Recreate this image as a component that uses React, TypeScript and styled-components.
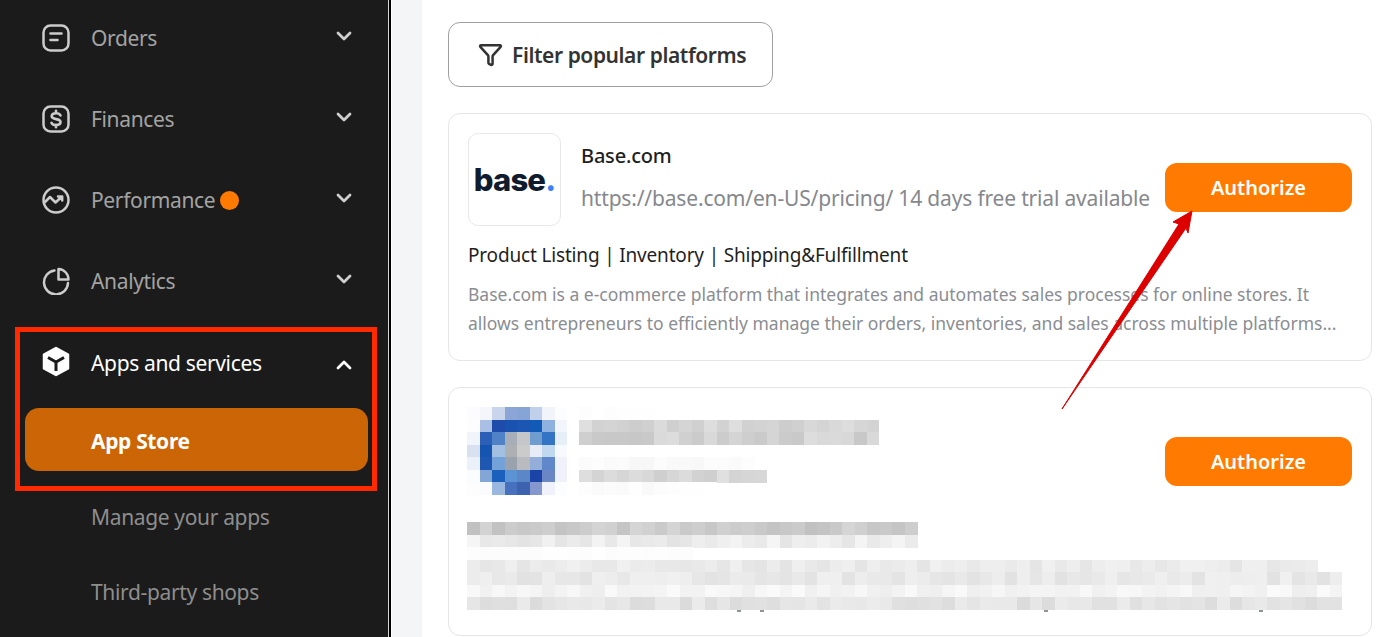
import styled, { createGlobalStyle } from "styled-components";
import { ChevronDown, ChevronUp, Funnel } from "lucide-react";

const GlobalStyle = createGlobalStyle`
  html, body {
    margin: 0;
    padding: 0;
    background: #fff;
    overflow: hidden;
  }
  * {
    box-sizing: border-box;
  }
`;

const FONT = `"Noto Sans", "Open Sans", sans-serif`;

const Page = styled.div`
  position: relative;
  display: flex;
  width: 1386px;
  height: 637px;
  overflow: hidden;
  font-family: ${FONT};
`;

const Sidebar = styled.aside`
  display: flex;
  flex-direction: column;
  flex: none;
  width: 388px;
  padding-top: 19.5px;
  background: #1b1b1b;
`;

const Rule = styled.div`
  flex: none;
  width: 4px;
  background: #000;
  border-left: 1px solid #d8d8d8;
  border-right: 1px solid #fff;
`;

const Gutter = styled.div`
  flex: none;
  width: 30px;
  background: #f4f5f7;
`;

const NavList = styled.nav`
  display: flex;
  flex-direction: column;
  gap: 45.25px;
`;

const NavRow = styled.div<{ $open?: boolean }>`
  display: flex;
  align-items: center;
  gap: 21px;
  height: 36px;
  padding: 0 32px 0 42px;
  font-size: 21px;
  letter-spacing: -0.35px;
  color: ${(props) => (props.$open ? "#fff" : "#a3a3a3")};
`;

const NavIcon = styled.svg`
  flex: none;
  width: 28px;
  fill: none;
  stroke: #cccccc;
  stroke-width: 2.5;
  stroke-linecap: round;
  stroke-linejoin: round;
`;

const AppsGlyph = styled.svg`
  flex: none;
  width: 28px;
  height: 31px;
  margin-top: -2px;
`;

const NavLabel = styled.span`
  display: flex;
  align-items: center;
  gap: 5px;
  white-space: nowrap;
`;

const Dot = styled.i`
  display: block;
  width: 19px;
  height: 19px;
  border-radius: 50%;
  background: #ff7a00;
`;

const Chevron = styled.span<{ $up?: boolean }>`
  display: flex;
  margin-left: auto;
  transform: translateY(${(props) => (props.$up ? "2px" : "-2px")});
  color: ${(props) => (props.$up ? "#fff" : "#cfcfcf")};
`;

const SubList = styled.div`
  display: flex;
  flex-direction: column;
  gap: 17px;
  margin: 27.5px 20px 0 25px;
`;

const SubItem = styled.div<{ $active?: boolean }>`
  display: flex;
  align-items: center;
  height: ${(props) => (props.$active ? "63px" : "58px")};
  padding-left: 66px;
  padding-top: ${(props) => (props.$active ? "2px" : "0")};
  border-radius: 14px;
  font-size: 21px;
  letter-spacing: -0.35px;
  font-weight: ${(props) => (props.$active ? 700 : 400)};
  color: ${(props) => (props.$active ? "#fff" : "#8e8e8e")};
  background: ${(props) => (props.$active ? "#cc6505" : "transparent")};
`;

const Main = styled.main`
  display: flex;
  flex-direction: column;
  flex: 1;
  gap: 26px;
  padding: 22px 14px 0 26px;
  background: #fff;
`;

const FilterButton = styled.button`
  display: flex;
  align-items: center;
  gap: 9px;
  width: 325px;
  height: 65px;
  padding: 0 0 0 29px;
  background: #fff;
  border: 1.5px solid #a0a0a0;
  border-radius: 12px;
  font-family: ${FONT};
  font-size: 21px;
  font-weight: 600;
  letter-spacing: -0.42px;
  color: #333;
`;

const Card = styled.section<{ $height: number }>`
  display: flex;
  flex-direction: column;
  flex: none;
  height: ${(props) => props.$height}px;
  padding: 19px;
  background: #fff;
  border: 1px solid #e6e6e6;
  border-radius: 12px;
`;

const CardHead = styled.div`
  display: flex;
  align-items: flex-start;
`;

const LogoBox = styled.div`
  display: flex;
  align-items: center;
  justify-content: center;
  flex: none;
  width: 93px;
  height: 93px;
  background: #fff;
  border: 1px solid #e8e8e8;
  border-radius: 10px;
`;

const LogoText = styled.span`
  font-family: Inter, sans-serif;
  font-size: 31px;
  font-weight: 800;
  letter-spacing: -0.8px;
  color: #101c2e;

  b {
    color: #3b82f6;
    font-weight: 800;
  }
`;

const HeadText = styled.div`
  display: flex;
  flex-direction: column;
  gap: 12px;
  margin: 8px 0 0 20px;
`;

const Title = styled.div`
  font-size: 20px;
  font-weight: 500;
  line-height: 30px;
  letter-spacing: -0.2px;
  color: #1f1f1f;
`;

const LinkLine = styled.div`
  font-size: 21px;
  line-height: 30px;
  letter-spacing: -0.17px;
  color: #85888c;
  white-space: nowrap;
`;

const AuthorizeButton = styled.button`
  flex: none;
  width: 187px;
  height: 49px;
  margin: 30px 0 0 auto;
  padding: 0 0 1px;
  background: #ff7a00;
  border: 0;
  border-radius: 12px;
  font-family: ${FONT};
  font-size: 20px;
  font-weight: 600;
  letter-spacing: 0;
  color: #fff;
`;

const Tags = styled.div`
  margin-top: 15px;
  font-size: 19px;
  line-height: 29px;
  letter-spacing: -0.17px;
  color: #1f1f1f;
`;

const Description = styled.p`
  width: 870px;
  margin: 10px 0 0;
  font-size: 17.5px;
  line-height: 29px;
  color: #8a8d92;
`;

const PixelBlock = styled.svg<{ $top?: number; $left?: number }>`
  display: block;
  flex: none;
  margin-top: ${(props) => props.$top ?? 0}px;
  margin-left: ${(props) => props.$left ?? 0}px;
  shape-rendering: crispEdges;
  filter: blur(0.6px);
`;

const RedFrame = styled.div`
  position: absolute;
  left: 15px;
  top: 327px;
  width: 362px;
  height: 164px;
  border: 5px solid #ff2a00;
  pointer-events: none;
`;

const ArrowLayer = styled.svg`
  position: absolute;
  left: 1050px;
  top: 200px;
  pointer-events: none;
`;

const CELL = 12.5;

// the blurred second listing, sampled by eye from the screenshot
const LOGO_CELLS = [
  ["#fcfcfe", "#f4f6fb", "#c9d5ea", "#8aa5d6", "#86a4d5", "#c0cfea", "#f1f5fb", "#fcfdfe"],
  ["#fdfdfe", "#a9bfe3", "#1f4bab", "#1a52b0", "#1c55b2", "#115ab6", "#8fb1e0", "#f2f6fc"],
  ["#f1f4fb", "#2b5fb8", "#4f82c6", "#a7aeb8", "#c4c6ca", "#6f9dd0", "#3375c4", "#e6eef8"],
  ["#d9e1f1", "#1555b1", "#a3c0e3", "#adb0b2", "#cbcbcb", "#e8ecf6", "#c0d9ef", "#f7fafd"],
  ["#ecf0f8", "#1f58b2", "#72a2d8", "#9aa3ad", "#b9bbc1", "#93aed8", "#5f87c9", "#eff2fa"],
  ["#fbfcfe", "#82a6d6", "#1b61bb", "#5b93d5", "#5b87c8", "#1a45a7", "#6a86c5", "#eff2fa"],
  ["#fdfdfe", "#fafbfd", "#9ab8df", "#4770be", "#3c62b0", "#8597cf", "#eff2fb", "#fcfdfe"],
];

// one row of grey cells: [how many, base grey, spread]
type PixelRow = [number, number, number];

const TITLE_ROWS: PixelRow[] = [
  [6, 254, 1],
  [24, 214, 9],
  [24, 210, 11],
  [0, 255, 0],
  [14, 250, 3],
  [15, 216, 9],
  [11, 252, 3],
];

const TEXT_ROWS: PixelRow[] = [
  [36, 203, 10],
  [36, 236, 9],
  [18, 253, 1],
  [68, 234, 6],
  [70, 233, 7],
  [70, 244, 6],
  [70, 227, 9],
];

// tails of letters that stick out below the blur
const TEXT_TAILS = [270, 293, 577, 792];

function grey(base: number, spread: number, row: number, col: number) {
  const noise = Math.sin(row * 91.7 + col * 12.9898) * 43758.5453;
  const v = Math.round(base + ((noise - Math.floor(noise)) * 2 - 1) * spread);
  const c = Math.min(255, Math.max(0, v));
  return `rgb(${c},${c},${Math.min(255, c + 1)})`;
}

function LogoPixels() {
  return (
    <PixelBlock $left={-1.5} width={100} height={87.5}>
      {LOGO_CELLS.map((row, r) =>
        row.map((color, c) => (
          <rect key={`${r}-${c}`} x={c * CELL} y={r * CELL} width={CELL + 0.5} height={CELL + 0.5} fill={color} />
        ))
      )}
    </PixelBlock>
  );
}

function GreyPixels({
  rows,
  top,
  left,
  cols,
  tails = [],
}: {
  rows: PixelRow[];
  top?: number;
  left?: number;
  cols: number;
  tails?: number[];
}) {
  const bottom = rows.length * CELL;
  return (
    <PixelBlock $top={top} $left={left} width={cols * CELL} height={bottom + 3}>
      {rows.map(([count, base, spread], r) =>
        Array.from({ length: count }, (_, c) => (
          <rect
            key={`${r}-${c}`}
            x={c * CELL}
            y={r * CELL}
            width={CELL + 0.5}
            height={CELL + 0.5}
            fill={grey(base, spread, r, c)}
          />
        ))
      )}
      {tails.map((x) => (
        <rect key={x} x={x} y={bottom} width={4} height={2} fill="#8f9296" />
      ))}
    </PixelBlock>
  );
}

function OrdersIcon() {
  return (
    <NavIcon viewBox="0 0 28 28" height={28}>
      <rect x="1.5" y="1.5" width="25" height="25" rx="7" />
      <path d="M8.5 9.5h11M8.5 16h7" strokeWidth="2.6" />
    </NavIcon>
  );
}

function FinancesIcon() {
  return (
    <NavIcon viewBox="0 0 28 28" height={28}>
      <rect x="1.5" y="1.5" width="25" height="25" rx="7" />
      <path d="M18.5 10.500c-.7-1.500-2.400-2.200-4.400-2.200-2.400 0-4.400 1-4.400 3s2 2.400 4.400 2.800 4.400 1 4.400 3-2 3-4.400 3c-2 0-3.800-.7-4.600-2.300M14 5.800v2.500M14 19.700v2.500" strokeWidth="2.600" />
    </NavIcon>
  );
}

function PerformanceIcon() {
  return (
    <NavIcon viewBox="0 0 28 28" height={28}>
      <circle cx="14" cy="14" r="12.5" />
      <path d="M3 16l5-5 5.500 5.500 6.500-6M16 10.500h4.200v4" />
    </NavIcon>
  );
}

function AnalyticsIcon() {
  return (
    <NavIcon viewBox="0 0 28 28" height={28}>
      <path d="M12.500 3.500A12 12 0 1 0 26 16" />
      <path d="M16.500 2v10.500h10A10.500 10.500 0 0 0 16.500 2z" />
    </NavIcon>
  );
}

function AppsIcon() {
  return (
    <AppsGlyph viewBox="0 0 28 31">
      <path d="M14 2l12 6.500v14L14 29 2 22.500v-14z" fill="#fff" stroke="#fff" strokeWidth="2.500" strokeLinejoin="round" />
      <path d="M6 11.500l8 4.500 8-4.500M14 16v9" fill="none" stroke="#1b1b1b" strokeWidth="3" />
    </AppsGlyph>
  );
}

const NAV_ITEMS = [
  { label: "Orders", icon: <OrdersIcon /> },
  { label: "Finances", icon: <FinancesIcon /> },
  { label: "Performance", icon: <PerformanceIcon />, dot: true },
  { label: "Analytics", icon: <AnalyticsIcon /> },
];

export default function App() {
  return (
    <>
      <GlobalStyle />
      <Page>
        <Sidebar>
          <NavList>
            {NAV_ITEMS.map((item) => (
              <NavRow key={item.label}>
                {item.icon}
                <NavLabel>
                  {item.label}
                  {item.dot && <Dot />}
                </NavLabel>
                <Chevron>
                  <ChevronDown size={24} strokeWidth={2.8} />
                </Chevron>
              </NavRow>
            ))}
            <NavRow $open>
              <AppsIcon />
              <NavLabel>Apps and services</NavLabel>
              <Chevron $up>
                <ChevronUp size={24} strokeWidth={2.8} />
              </Chevron>
            </NavRow>
          </NavList>
          <SubList>
            <SubItem $active>App Store</SubItem>
            <SubItem>Manage your apps</SubItem>
            <SubItem>Third-party shops</SubItem>
          </SubList>
        </Sidebar>
        <Rule />
        <Gutter />
        <Main>
          <FilterButton>
            <Funnel size={25} strokeWidth={2.4} />
            Filter popular platforms
          </FilterButton>
          <Card $height={248}>
            <CardHead>
              <LogoBox>
                <LogoText>
                  base<b>.</b>
                </LogoText>
              </LogoBox>
              <HeadText>
                <Title>Base.com</Title>
                <LinkLine>https://base.com/en-US/pricing/ 14 days free trial available</LinkLine>
              </HeadText>
              <AuthorizeButton>Authorize</AuthorizeButton>
            </CardHead>
            <Tags>Product Listing | Inventory | Shipping&amp;Fulfillment</Tags>
            <Description>
              Base.com is a e-commerce platform that integrates and automates sales processes for online stores. It
              allows entrepreneurs to efficiently manage their orders, inventories, and sales across multiple platforms...
            </Description>
          </Card>
          <Card $height={249}>
            <CardHead>
              <LogoPixels />
              <GreyPixels rows={TITLE_ROWS} cols={24} left={12.5} />
              <AuthorizeButton>Authorize</AuthorizeButton>
            </CardHead>
            <GreyPixels rows={TEXT_ROWS} cols={70} top={24.5} left={-1.5} tails={TEXT_TAILS} />
          </Card>
        </Main>
        <RedFrame />
        <ArrowLayer width="150" height="215" viewBox="1050 200 150 215">
          <path d="M1062 409L1179 224 1173 222 1192 211 1188 233 1186 228Z" fill="#dc0000" stroke="#dc0000" strokeWidth="1" strokeLinejoin="round" />
        </ArrowLayer>
      </Page>
    </>
  );
}
